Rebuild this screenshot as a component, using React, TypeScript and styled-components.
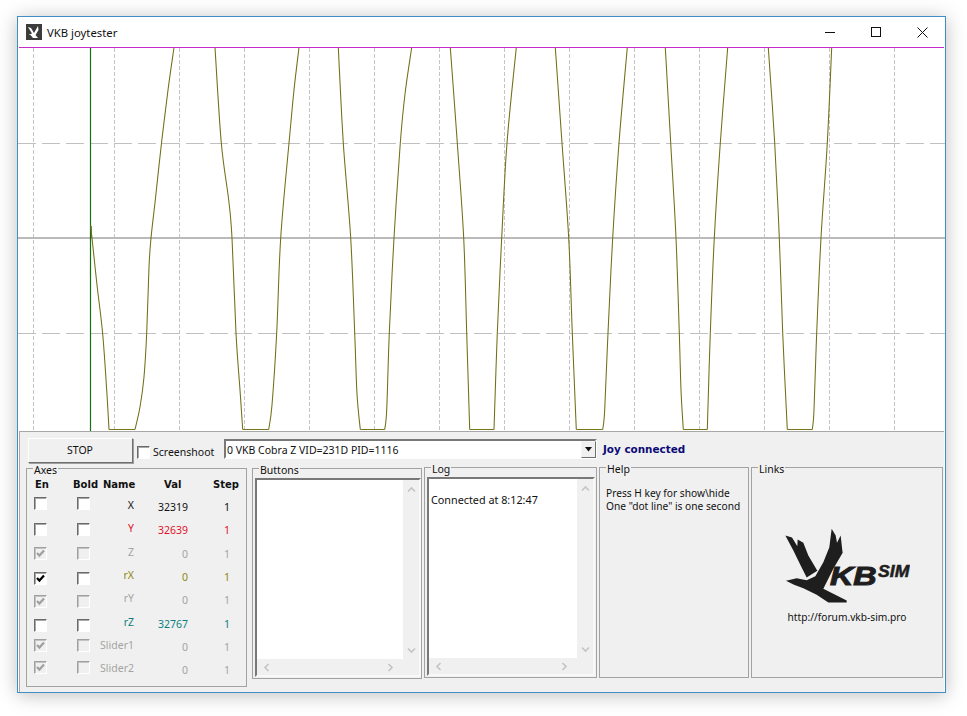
import React from "react";
import styled, { createGlobalStyle } from "styled-components";

const Global = createGlobalStyle`
  html, body { margin: 0; padding: 0; background: #fff; }
  body { width: 967px; height: 716px; overflow: hidden; }
  #root { height: 100%; }
`;

const UI = `"Noto Sans", "Liberation Sans", sans-serif`;
const BOLD = `"DejaVu Sans", "Liberation Sans", sans-serif`;

const Page = styled.div`
  width: 967px;
  height: 716px;
  padding: 16px 0 0 17px;
  box-sizing: border-box;
  font-family: ${UI};
  font-size: 10.5px;
  color: #111;
`;
const Window = styled.div`
  width: 929px;
  height: 677px;
  box-sizing: border-box;
  border: 1px solid #3f8fc6;
  background: #fff;
  box-shadow: 0 2px 18px rgba(0, 0, 0, 0.26);
  display: flex;
  flex-direction: column;
`;
const TitleBar = styled.div`
  height: 30px;
  display: flex;
  align-items: center;
  flex: none;
  padding-left: 8px;
  font-size: 11.3px;
`;
const TitleText = styled.span`
  margin-left: 5px;
  flex: 1;
  color: #111;
`;
const WinButton = styled.div`
  width: 46px;
  height: 30px;
  display: flex;
  align-items: center;
  justify-content: center;
  flex: none;
`;
const Chart = styled.svg`
  display: block;
  flex: none;
  width: 927px;
  height: 384px;
`;
const Panel = styled.div`
  flex: 1;
  min-height: 0;
  margin: 0 1px 0 1px;
  box-sizing: border-box;
  border-top: 1px solid #a8a8a8;
  border-left: 1px solid #a8a8a8;
  background: #f0f0f0;
  padding: 6px 0 0 6px;
`;
const TopRow = styled.div`
  display: flex;
  align-items: flex-start;
  height: 24px;
  margin-bottom: 5px;
`;
const StopButton = styled.div`
  width: 105px;
  height: 25px;
  margin-left: 2px;
  box-sizing: border-box;
  border: 1px solid;
  border-color: #fff #6f6f6f #6f6f6f #fff;
  box-shadow: 1px 1px 0 #a0a0a0;
  display: flex;
  align-items: center;
  justify-content: center;
  padding: 0 1px 1px 0;
`;
const ShotLabel = styled.div`
  display: flex;
  align-items: center;
  margin: 7px 0 0 4px;
  width: 87px;
  height: 14px;
  gap: 3px;
`;
const Select = styled.div`
  width: 373px;
  height: 20px;
  margin-top: 1px;
  box-sizing: border-box;
  border: 2px solid;
  border-color: #787878 #fff #fff #787878;
  background: #fff;
  display: flex;
  align-items: center;
  justify-content: space-between;
  padding-left: 1px;
  line-height: 16px;
`;
const SelectText = styled.span`
  padding-top: 1px;
`;
const SelectArrow = styled.div`
  width: 15px;
  height: 17px;
  box-sizing: border-box;
  margin-right: -1px;
  border: 1px solid;
  border-color: #f4f4f4 #6f6f6f #6f6f6f #f4f4f4;
  background: #f0f0f0;
  display: flex;
  align-items: center;
  justify-content: center;
`;
const Status = styled.div`
  margin: 5px 0 0 6px;
  font-family: ${BOLD};
  font-weight: 700;
  font-size: 10.4px;
  color: #0a0a78;
`;
const GroupRow = styled.div`
  display: flex;
  align-items: flex-start;
  gap: 2px;
`;
const Group = styled.div<{ $w: number; $h: number; $top?: number; $gapRight?: number }>`
  position: relative;
  width: ${(p) => p.$w}px;
  height: ${(p) => p.$h}px;
  flex: none;
  box-sizing: border-box;
  border: 1px solid #a2a2a2;
  margin-top: ${(p) => p.$top ?? 0}px;
  margin-right: ${(p) => p.$gapRight ?? 0}px;
`;
const Legend = styled.span`
  position: absolute;
  left: 6px;
  top: -5px;
  padding: 0 1px;
  background: #f0f0f0;
  line-height: 12px;
`;
const HeadRow = styled.div`
  display: grid;
  grid-template-columns: 38px 30px 61px 49px auto;
  padding: 9px 0 0 8px;
  height: 16px;
  font-family: ${BOLD};
  font-weight: 700;
  font-size: 10px;
  line-height: 14px;
  color: #111;
`;
const AxisRow = styled.div<{ $color: string }>`
  display: grid;
  grid-template-columns: 43px 14px 43px 54px 42px;
  align-items: center;
  height: 23.3px;
  padding-left: 7px;
  color: ${(p) => p.$color};
  line-height: 14px;
`;
const Box = styled.div<{ $off?: boolean; $nudge?: number }>`
  width: 13px;
  height: 13px;
  box-sizing: border-box;
  border: 1px solid;
  border-color: ${(p) => (p.$off ? "#a0a0a0 #fff #fff #a0a0a0" : "#6a6a6a #fff #fff #6a6a6a")};
  box-shadow: inset 1px 1px 0 ${(p) => (p.$off ? "#c4c4c4" : "#a8a8a8")};
  background: ${(p) => (p.$off ? "#f0f0f0" : "#fff")};
  display: flex;
  align-items: center;
  justify-content: center;
  transform: translateY(${(p) => p.$nudge ?? 0}px);
  flex: none;
`;
const NameCell = styled.div`
  text-align: right;
  white-space: nowrap;
  padding-bottom: 1px;
`;
const ValCell = styled.div`
  text-align: right;
  padding-top: 3px;
`;
const StepCell = styled.div`
  text-align: right;
  padding-top: 3px;
`;
const ListBox = styled.div<{ $w: number }>`
  width: ${(p) => p.$w}px;
  height: 199px;
  box-sizing: border-box;
  margin: 9px 0 0 2px;
  border: 2px solid;
  border-color: #787878 #f8f8f8 #f8f8f8 #787878;
  background: #f0f0f0;
  display: grid;
  grid-template-columns: 1fr 16px;
  grid-template-rows: 1fr 16px;
`;
const ListBody = styled.div`
  background: #fff;
  padding: 14px 2px;
  line-height: 14px;
  font-size: 10.8px;
`;
const VScroll = styled.div`
  display: flex;
  flex-direction: column;
  align-items: center;
  justify-content: space-between;
  padding: 5px 0 4px;
  grid-row: 1;
  grid-column: 2;
`;
const HScroll = styled.div`
  display: flex;
  align-items: center;
  justify-content: space-between;
  padding: 0 8px 0 5px;
  grid-row: 2;
  grid-column: 1;
`;
const HelpText = styled.div`
  padding: 19px 0 0 6px;
  line-height: 13px;
  font-size: 10.2px;
  white-space: nowrap;
`;
const LinksBody = styled.div`
  display: flex;
  flex-direction: column;
  align-items: center;
  padding-top: 59px;
`;
const LinkText = styled.div`
  margin-top: 6px;
  line-height: 14px;
  font-size: 10.2px;
`;

const Chevron = ({ d }: { d: string }) => (
  <svg width="9" height="9" viewBox="0 0 9 9">
    <path d={d} fill="none" stroke="#c4c4c4" strokeWidth="1.6" />
  </svg>
);
const UP = "M1 6.5 L4.5 3 L8 6.5";
const DOWN = "M1 2.5 L4.5 6 L8 2.5";
const LEFT = "M6.5 1 L3 4.5 L6.5 8";
const RIGHT = "M2.5 1 L6 4.5 L2.5 8";

const Scrolled = ({ w, children }: { w: number; children?: React.ReactNode }) => (
  <ListBox $w={w}>
    <ListBody>{children}</ListBody>
    <VScroll>
      <Chevron d={UP} />
      <Chevron d={DOWN} />
    </VScroll>
    <HScroll>
      <Chevron d={LEFT} />
      <Chevron d={RIGHT} />
    </HScroll>
  </ListBox>
);

const Check = ({ color }: { color: string }) => (
  <svg width="9" height="9" viewBox="0 0 9 9">
    <path d="M1 4 L3.4 6.6 L8 1.4" fill="none" stroke={color} strokeWidth="2.2" />
  </svg>
);

type P = [number, number];
/* Each edge is one swing of the axis trace; the flat bottoms join them with straight lines. */
const edges: P[][] = [
  [[90.5, 226], [92, 238], [97, 285], [102.6, 333], [106.7, 390], [109, 429.5]],
  [[135, 429.5], [140, 407], [144, 377], [146.7, 333], [149, 267], [151, 238], [155.3, 200], [161.5, 143], [168, 90], [174, 47.5]],
  [[215, 47.5], [221.3, 143], [228.7, 200], [232, 238], [236, 333], [240, 390], [242.7, 429.5]],
  [[268.7, 429.5], [272, 405], [276.7, 333], [280.7, 238], [289, 143], [294, 90], [299, 47.5]],
  [[338.3, 47.5], [343.3, 143], [350.7, 238], [354.7, 333], [357, 394], [360.3, 429.5]],
  [[384.7, 429.5], [386.7, 410], [389.3, 333], [394, 238], [400.3, 143], [405, 94], [411.7, 47.5]],
  [[450.3, 47.5], [457.3, 143], [463.7, 238], [466.7, 333], [469.7, 429.5]],
  [[494, 429.5], [497.3, 333], [501.7, 238], [507, 143], [516.3, 47.5]],
  [[555.3, 47.5], [562, 143], [568.7, 238], [572.3, 333], [576.3, 429.5]],
  [[602.7, 429.5], [604.7, 410], [608, 333], [612.7, 238], [619, 143], [627.3, 47.5]],
  [[665.3, 47.5], [670.7, 143], [676, 238], [679.3, 333], [681, 390], [683.3, 429.5]],
  [[707.3, 429.5], [710.3, 333], [714.3, 238], [720.3, 143], [727.7, 47.5]],
  [[768.3, 47.5], [774.7, 143], [779.3, 238], [782.7, 333], [787.3, 429.5]],
  [[812.3, 429.5], [814, 410], [816.7, 333], [821, 238], [827.3, 143], [831.7, 47.5]],
];
const smooth = (a: P[]): string => {
  let d = `M${a[0][0]} ${a[0][1]}`;
  for (let i = 0; i < a.length - 1; i++) {
    const p0 = a[Math.max(0, i - 1)];
    const p1 = a[i];
    const p2 = a[i + 1];
    const p3 = a[Math.min(a.length - 1, i + 2)];
    const c1x = p1[0] + (p2[0] - p0[0]) / 6;
    const c1y = p1[1] + (p2[1] - p0[1]) / 6;
    const c2x = p2[0] - (p3[0] - p1[0]) / 6;
    const c2y = p2[1] - (p3[1] - p1[1]) / 6;
    d += ` C${c1x} ${c1y} ${c2x} ${c2y} ${p2[0]} ${p2[1]}`;
  }
  return d;
};
const flats: number[][] = [[109, 135], [242.7, 268.7], [360.3, 384.7], [469.7, 494], [576.3, 602.7], [683.3, 707.3], [787.3, 812.3]];
const vLines = [33, 114, 179, 244, 309, 374, 439, 504, 569, 634, 699, 764, 829, 894];

const GREY = "#a4a4a4";
const axes = [
  { n: "X", v: "32319", s: "1", c: "#111", en: false, off: false, nudge: -2 },
  { n: "Y", v: "32639", s: "1", c: "#e0102a", en: false, off: false, nudge: 1 },
  { n: "Z", v: "0", s: "1", c: GREY, en: true, off: true, nudge: 1 },
  { n: "rX", v: "0", s: "1", c: "#8a8a10", en: true, off: false, nudge: 3 },
  { n: "rY", v: "0", s: "1", c: GREY, en: true, off: true, nudge: 3 },
  { n: "rZ", v: "32767", s: "1", c: "#0b7f80", en: false, off: false, nudge: 3 },
  { n: "Slider1", v: "0", s: "1", c: GREY, en: true, off: true, nudge: 0 },
  { n: "Slider2", v: "0", s: "1", c: GREY, en: true, off: true, nudge: -1 },
];

export default function App() {
  return (
    <Page>
      <Global />
      <Window>
        <TitleBar>
          <svg width="16" height="16" viewBox="0 0 16 16">
            <rect width="16" height="16" fill="#3c3c3c" />
            <path d="M2 3 L5 4 L8 9 L12 2 L12.5 6 L9.5 11 L12 14 L7 14 L4.5 11 L2.5 11 L6 9.5 Z" fill="#fff" />
          </svg>
          <TitleText>VKB joytester</TitleText>
          <WinButton>
            <svg width="10" height="10" viewBox="0 0 10 10">
              <path d="M0 5.5 H10" stroke="#111" strokeWidth="1" />
            </svg>
          </WinButton>
          <WinButton>
            <svg width="10" height="10" viewBox="0 0 10 10">
              <rect x=".5" y=".5" width="9" height="9" fill="none" stroke="#111" strokeWidth="1" />
            </svg>
          </WinButton>
          <WinButton>
            <svg width="11" height="11" viewBox="0 0 11 11">
              <path d="M.5 .5 L10.5 10.5 M10.5 .5 L.5 10.5" stroke="#111" strokeWidth="1" />
            </svg>
          </WinButton>
        </TitleBar>
        <Chart viewBox="18 47 927 384">
          {vLines.map((x) => (
            <line key={x} x1={x + 0.5} x2={x + 0.5} y1={48} y2={431} stroke="#c4c4c4" strokeDasharray="4 2" />
          ))}
          <line x1={18} x2={945} y1={143.5} y2={143.5} stroke="#c0c0c0" strokeDasharray="18 6" />
          <line x1={18} x2={945} y1={333.5} y2={333.5} stroke="#c0c0c0" strokeDasharray="18 6" />
          <line x1={18} x2={945} y1={238} y2={238} stroke="#bababa" strokeWidth="2" />
          <line x1={90.5} x2={90.5} y1={47} y2={431} stroke="#1c6e14" strokeWidth="1.2" />
          <line x1={91} x2={91} y1={226} y2={238} stroke="#1c6e14" strokeWidth="1.4" />
          {edges.map((e, i) => (
            <path key={i} d={smooth(e)} fill="none" stroke="#6f6f18" strokeWidth="1.05" />
          ))}
          {flats.map(([a, b]) => (
            <line key={a} x1={a} x2={b} y1={429.5} y2={429.5} stroke="#77771a" strokeWidth="1" />
          ))}
          <line x1={19} x2={944} y1={47.5} y2={47.5} stroke="#c82cc8" strokeWidth="1" />
        </Chart>
        <Panel>
          <TopRow>
            <StopButton>STOP</StopButton>
            <ShotLabel>
              <Box />
              Screenshoot
            </ShotLabel>
            <Select>
              <SelectText>0 VKB Cobra Z VID=231D PID=1116</SelectText>
              <SelectArrow>
                <svg width="9" height="5" viewBox="0 0 9 5">
                  <path d="M1 0 H8 L4.5 4.5 Z" fill="#111" />
                </svg>
              </SelectArrow>
            </Select>
            <Status>Joy connected</Status>
          </TopRow>
          <GroupRow>
            <Group $w={221} $h={219} $top={1} $gapRight={3}>
              <Legend>Axes</Legend>
              <HeadRow>
                <span>En</span>
                <span>Bold</span>
                <span>Name</span>
                <span>Val</span>
                <span>Step</span>
              </HeadRow>
              {axes.map((a) => (
                <AxisRow key={a.n} $color={a.c}>
                  <Box $off={a.off} $nudge={a.nudge}>
                    {a.en && <Check color={a.off ? "#a0a0a0" : "#000"} />}
                  </Box>
                  <Box $off={a.off} $nudge={a.nudge} />
                  <NameCell>{a.n}</NameCell>
                  <ValCell>{a.v}</ValCell>
                  <StepCell>{a.s}</StepCell>
                </AxisRow>
              ))}
            </Group>
            <Group $w={170} $h={211} $top={1}>
              <Legend>Buttons</Legend>
              <Scrolled w={166} />
            </Group>
            <Group $w={173} $h={211}>
              <Legend>Log</Legend>
              <Scrolled w={168}>Connected at 8:12:47</Scrolled>
            </Group>
            <Group $w={150} $h={211}>
              <Legend>Help</Legend>
              <HelpText>
                Press H key for show\hide
                <br />
                One "dot line" is one second
              </HelpText>
            </Group>
            <Group $w={192} $h={211}>
              <Legend>Links</Legend>
              <LinksBody>
                <svg width="125" height="77" viewBox="585 325 375 230">
                  <path d="M586 350 L606 356 L622 382 L623 362 L640 372 L655 410 L682 456 L650 476 L632 440 L610 395 Z" fill="#1e1e1e" />
                  <path d="M725 330 L737 350 L741 372 L752 350 L757 395 L758 402 L730 450 L700 510 L770 545 L770 551 L715 551 L680 528 L640 508 L612 498 L588 486 L620 478 L650 484 L676 472 L700 430 L718 385 Z" fill="#1e1e1e" />
                  <text x="720" y="500" fill="#1e1e1e" stroke="#1e1e1e" strokeWidth="3" fontFamily="Liberation Sans" fontWeight="700" fontStyle="italic" fontSize="76" textLength="140" lengthAdjust="spacingAndGlyphs">KB</text>
                  <text x="864" y="475" fill="#1e1e1e" stroke="#1e1e1e" strokeWidth="1.5" fontFamily="Liberation Sans" fontWeight="700" fontStyle="italic" fontSize="48" textLength="94" lengthAdjust="spacingAndGlyphs">SIM</text>
                </svg>
                <LinkText>http://forum.vkb-sim.pro</LinkText>
              </LinksBody>
            </Group>
          </GroupRow>
        </Panel>
      </Window>
    </Page>
  );
}
